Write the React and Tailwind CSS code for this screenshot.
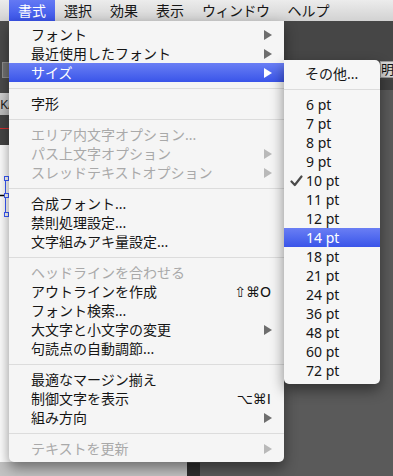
import React from 'react';

const FONT = "font-['Noto_Sans','Noto_Sans_CJK_JP',sans-serif]";

const Arrow = ({ color }) => (
    <svg width="8" height="10" viewBox="0 0 8 10"><polygon points="0,0 8,5 0,10" fill={color} /></svg>
);

const Check = () => (
    <svg width="13" height="12" viewBox="0 0 13 12">
        <path d="M1.5 6.5 L4.8 10 L11.5 1.5" fill="none" stroke="#4a4a4a" strokeWidth="2.2" strokeLinecap="round" strokeLinejoin="round" />
    </svg>
);

const Sep = () => (
    <div className="h-[12px] flex items-center"><div className="h-px w-full bg-[#dcdcdc]" /></div>
);

const Row = ({ label, arrow, shortcut, disabled, active }) => {
    const text = active ? 'text-white' : disabled ? 'text-[#a9a9a9]' : 'text-[#151515]';
    const arrowColor = active ? '#ffffff' : disabled ? '#b9b9b9' : '#6e6e6e';
    return (
        <div className={`h-[19px] flex items-center justify-between pl-[22px] pr-[12px] leading-none ${text} ${active ? 'bg-linear-to-b from-[#6a7ef4] to-[#3a54e9]' : ''}`}>
            <span>{label}</span>
            {arrow && <Arrow color={arrowColor} />}
            {shortcut && <span className="font-['DejaVu_Sans',sans-serif] text-[14px] pr-[1px]">{shortcut}</span>}
        </div>
    );
};

const sizes = ['6', '7', '8', '9', '10', '11', '12', '14', '18', '21', '24', '36', '48', '60', '72'];

export default function App() {
    return (
        <div className={`relative w-[393px] h-[476px] overflow-hidden bg-[#4a4a4a] text-[14px] ${FONT}`}>
            {/* menu bar */}
            <div className="h-[21px] flex pl-[9px] bg-linear-to-b from-[#ececec] to-[#d2d2d2] text-[#161616] leading-none">
                <div className="px-[9px] flex items-center text-white bg-linear-to-b from-[#6479f4] to-[#3a53e9]">書式</div>
                <div className="px-[9px] flex items-center">選択</div>
                <div className="px-[9px] flex items-center">効果</div>
                <div className="px-[9px] flex items-center">表示</div>
                <div className="px-[9px] flex items-center tracking-[-0.5px]">ウィンドウ</div>
                <div className="px-[9px] flex items-center">ヘルプ</div>
            </div>

            {/* document behind */}
            <div className="flex h-[455px]">
                <div className="w-[187px] shrink-0 flex flex-col">
                    <div className="h-[39px] bg-[#4b4b4b]" />
                    <div className="h-[20px] bg-[#4b4b4b] pt-[2px] pl-[2px]">
                        <div className="h-[16px] w-[120px] bg-[#727272] border border-[#8f8f8f]" />
                    </div>
                    <div className="h-[13px] bg-[#4b4b4b]" />
                    <div className="h-[22px] bg-linear-to-b from-[#d4d4d4] to-[#bdbdbd] flex items-center text-[13px] text-[#222] leading-none">K/</div>
                    <div className="h-[30px] bg-[#454545] pt-[13px]"><div className="h-px bg-[#d23030]" /></div>
                    <div className="flex-1 bg-white pt-[30px]">
                        <svg width="12" height="46" viewBox="0 0 12 46">
                            <line x1="5.5" y1="4" x2="5.5" y2="42" stroke="#3b5bff" strokeWidth="1" />
                            <line x1="0" y1="20.5" x2="7" y2="20.5" stroke="#000" strokeWidth="1.5" />
                            <rect x="4.5" y="1.5" width="4" height="4" fill="#fff" stroke="#3b5bff" />
                            <rect x="4.5" y="18.5" width="4" height="4" fill="#fff" stroke="#3b5bff" />
                            <rect x="4.5" y="37.5" width="4" height="4" fill="#fff" stroke="#3b5bff" />
                        </svg>
                    </div>
                    <div className="h-[14px] bg-[#c3c3c3]" />
                </div>
                <div className="w-[13px] shrink-0 flex flex-col">
                    <div className="flex-1 bg-[#4b4b4b]" />
                    <div className="h-[13px] bg-[#2e2e2e]" />
                </div>
                <div className="flex-1 min-w-0 overflow-hidden flex flex-col">
                    <div className="h-[39px] bg-[#464646]" />
                    <div className="h-[20px] bg-[#464646] pl-[180px] pt-[1px]">
                        <div className="h-[17px] w-[60px] bg-[#d6d6d6] border border-[#9a9a9a] text-[13px] text-[#111] leading-none flex items-center whitespace-nowrap">明朝体</div>
                    </div>
                    <div className="h-[10px] bg-[#404040]" />
                    <div className="flex-1 bg-[#5a5a5a]" />
                </div>
            </div>

            {/* 書式 menu */}
            <div className="absolute left-[9px] top-[21px] w-[275px] pt-[4px] pb-[4px] bg-[#f5f5f5] rounded-b-[5px] shadow-[0_6px_14px_rgba(0,0,0,0.45)]">
                <Row label="フォント" arrow />
                <Row label="最近使用したフォント" arrow />
                <Row label="サイズ" arrow active />
                <Sep />
                <Row label="字形" />
                <Sep />
                <Row label="エリア内文字オプション..." disabled />
                <Row label="パス上文字オプション" arrow disabled />
                <Row label="スレッドテキストオプション" arrow disabled />
                <Sep />
                <Row label="合成フォント..." />
                <Row label="禁則処理設定..." />
                <Row label="文字組みアキ量設定..." />
                <Sep />
                <Row label="ヘッドラインを合わせる" disabled />
                <Row label="アウトラインを作成" shortcut="⇧⌘O" />
                <Row label="フォント検索..." />
                <Row label="大文字と小文字の変更" arrow />
                <Row label="句読点の自動調節..." />
                <Sep />
                <Row label="最適なマージン揃え" />
                <Row label="制御文字を表示" shortcut="⌥⌘I" />
                <Row label="組み方向" arrow />
                <Sep />
                <Row label="テキストを更新" arrow disabled />
            </div>

            {/* サイズ submenu */}
            <div className="absolute left-[284px] top-[60px] w-[96px] pt-[4px] pb-[4px] bg-[#f6f6f6] rounded-[5px] rounded-tl-none shadow-[0_6px_14px_rgba(0,0,0,0.45)] text-[#151515]">
                <div className="h-[19px] flex items-center pl-[21px] leading-none">その他...</div>
                <Sep />
                {sizes.map(s => (
                    <div key={s} className={`h-[19px] flex items-center leading-none ${s === '14' ? 'text-white bg-linear-to-b from-[#6a7ef4] to-[#3a54e9]' : ''}`}>
                        <div className="w-[22px] pl-[6px] flex items-center">{s === '10' && <Check />}</div>
                        <span>{s} pt</span>
                    </div>
                ))}
            </div>
        </div>
    );
}
